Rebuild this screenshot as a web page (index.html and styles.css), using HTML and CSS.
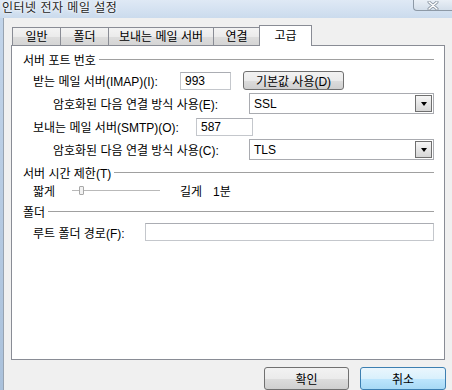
FILE: index.html
```html
<!DOCTYPE html>
<html lang="ko">
<head>
    <meta charset="UTF-8">
    <title>인터넷 전자 메일 설정</title>
    <link rel="stylesheet" href="styles.css">
</head>
<body>
    <div class="window">
        <div class="titlebar">
            <span class="title">인터넷 전자 메일 설정</span>
            <div class="close-btn">
                <svg width="14" height="9" viewBox="0 0 14 9">
                    <path d="M3 1 L11 8 M11 1 L3 8" stroke="#8a96a3" stroke-width="3" stroke-linecap="round"/>
                    <path d="M3 1 L11 8 M11 1 L3 8" stroke="#ffffff" stroke-width="1.4" stroke-linecap="round"/>
                </svg>
            </div>
        </div>

        <div class="client">
            <div class="tabs">
                <div class="tab tab-general">일반</div>
                <div class="tab tab-folder">폴더</div>
                <div class="tab tab-smtp">보내는 메일 서버</div>
                <div class="tab tab-conn">연결</div>
                <div class="tab tab-adv active">고급</div>
            </div>

            <div class="panel">
                <div class="group"><span>서버 포트 번호</span></div>

                <div class="row indent1">
                    <span class="label lbl-imap">받는 메일 서버(IMAP)(I):</span>
                    <div class="textbox port-imap">993</div>
                    <button class="push-btn" type="button">기본값 사용(D)</button>
                </div>
                <div class="row indent2">
                    <span class="label lbl-enc">암호화된 다음 연결 방식 사용(E):</span>
                    <div class="combo">
                        <span class="combo-text">SSL</span>
                        <span class="combo-arrow"></span>
                    </div>
                </div>
                <div class="row indent1">
                    <span class="label lbl-smtp">보내는 메일 서버(SMTP)(O):</span>
                    <div class="textbox port-smtp">587</div>
                </div>
                <div class="row indent2">
                    <span class="label lbl-enc">암호화된 다음 연결 방식 사용(C):</span>
                    <div class="combo">
                        <span class="combo-text">TLS</span>
                        <span class="combo-arrow"></span>
                    </div>
                </div>

                <div class="group group-timeout"><span>서버 시간 제한(T)</span></div>
                <div class="row slider-row indent1">
                    <span class="label lbl-short">짧게</span>
                    <div class="slider"><span class="thumb"></span></div>
                    <span class="lbl-long">길게</span>
                    <span class="lbl-value">1분</span>
                </div>

                <div class="group group-folder"><span>폴더</span></div>
                <div class="row root-row indent1">
                    <span class="label lbl-root">루트 폴더 경로(F):</span>
                    <div class="textbox root-path"></div>
                </div>
            </div>

            <div class="footer">
                <button class="dlg-btn" type="button">확인</button>
                <button class="dlg-btn default" type="button">취소</button>
            </div>
        </div>
    </div>
</body>
</html>
```

FILE: styles.css
```css
html, body {
    margin: 0;
    padding: 0;
    width: 452px;
    height: 390px;
    overflow: hidden;
}

body {
    font-family: "Liberation Sans", "Noto Sans CJK KR", sans-serif;
    font-size: 12px;
    color: #000;
    background: linear-gradient(to bottom, #c3d5ea, #aac1db);
}

.window {
    display: flex;
    flex-direction: column;
    height: 390px;
}

/* 타이틀바 */
.titlebar {
    display: flex;
    align-items: flex-start;
    height: 21px;
    background: linear-gradient(to bottom, #dfe9f5, #cbdbed);
}

.title {
    padding: 1px 0 0 2px;
    font-size: 12px;
    line-height: 15px;
    color: #1e1e1e;
    letter-spacing: 0.5px;
    text-shadow: 0 0 4px #fff, 0 0 2px #fff;
}

.close-btn {
    margin-left: auto;
    width: 38px;
    height: 10px;
    display: flex;
    align-items: center;
    justify-content: center;
    border: 1px solid #8d99a6;
    border-top: none;
    border-right: none;
    border-radius: 0 0 0 4px;
    background: linear-gradient(to bottom, #e9eff6, #d3deea);
}

/* 본문 */
.client {
    flex: 1;
    margin-left: 3px;
    border-left: 1px solid #97a3b1;
    background: #f0f0f0;
    padding: 0 7px;
}

.tabs {
    display: flex;
    align-items: flex-end;
    height: 20px;
    margin-top: 7px;
    padding-left: 1px;
}

.tab {
    height: 18px;
    line-height: 18px;
    text-align: center;
    box-sizing: border-box;
    border: 1px solid #898c95;
    border-bottom: none;
    margin-right: -1px;
    background: linear-gradient(to bottom, #f3f3f3 0%, #ebebeb 50%, #dddddd 51%, #d5d5d5 100%);
}

.tab-general { width: 49px; }
.tab-folder { width: 49px; }
.tab-smtp { width: 106px; }
.tab-conn { width: 47px; }

.tab.active {
    width: 53px;
    height: 21px;
    line-height: 20px;
    margin-bottom: -1px;
    background: #fff;
    position: relative;
    z-index: 1;
}

.panel {
    height: 315px;
    box-sizing: border-box;
    border: 1px solid #898c95;
    background: #fff;
    padding: 3px 10px 0 11px;
}

.group {
    display: flex;
    align-items: center;
    height: 20px;
    gap: 3px;
}

.group::after {
    content: "";
    flex: 1;
    border-top: 1px solid #a0a0a0;
}

.group-timeout { margin-top: 1px; }
.group-folder { margin-top: 3px; }

.row {
    display: flex;
    align-items: center;
    height: 23px;
}

.indent1 { padding-left: 10px; }
.indent2 { padding-left: 30px; }

.label {
    flex-shrink: 0;
    white-space: nowrap;
}

.lbl-imap { width: 147px; }
.lbl-smtp { width: 163px; }
.lbl-enc { width: 196px; }
.lbl-short { width: 39px; }
.lbl-root { width: 112px; }

.textbox {
    height: 18px;
    line-height: 16px;
    box-sizing: border-box;
    padding-left: 4px;
    border: 1px solid #c4c7cc;
    border-top-color: #abadb3;
    background: #fff;
}

.port-imap { width: 51px; }
.port-smtp { width: 57px; }
.root-path { width: 290px; }

.push-btn {
    margin-left: 12px;
    width: 101px;
    height: 19px;
    padding: 0;
    font: inherit;
    color: #000;
    border: 1px solid #707070;
    border-radius: 3px;
    background: linear-gradient(to bottom, #f2f2f2 0%, #ebebeb 50%, #dddddd 51%, #cfcfcf 100%);
}

.combo {
    width: 186px;
    height: 21px;
    box-sizing: border-box;
    border: 1px solid #a9abb0;
    padding: 1px;
    display: flex;
    align-items: center;
    background: #fff;
}

.combo-text {
    flex: 1;
    padding-left: 3px;
}

.combo-arrow {
    width: 17px;
    height: 17px;
    box-sizing: border-box;
    border: 1px solid #6f6f6f;
    background: linear-gradient(to bottom, #f6f6f6, #d6d6d6);
    display: flex;
    align-items: center;
    justify-content: center;
}

.combo-arrow::before {
    content: "";
    border-left: 3px solid transparent;
    border-right: 3px solid transparent;
    border-top: 4px solid #000;
    margin-top: 1px;
}

/* 슬라이더 */
.slider-row { height: 16px; }

.slider {
    width: 88px;
    height: 9px;
    box-sizing: border-box;
    padding-left: 7px;
    display: flex;
    align-items: center;
    background: linear-gradient(#b9b9b9, #b9b9b9) center / 100% 1px no-repeat;
}

.thumb {
    width: 3px;
    height: 7px;
    border: 1px solid #a8a8a8;
    border-radius: 1px;
    background: #f2f2f2;
}

.lbl-long { margin-left: 20px; }
.lbl-value { margin-left: 11px; }

.root-row { height: 22px; }

/* 하단 버튼 */
.footer {
    display: flex;
    justify-content: flex-end;
    gap: 11px;
    margin-top: 7px;
    margin-right: -1px;
}

.dlg-btn {
    width: 85px;
    height: 23px;
    padding: 0;
    font: inherit;
    color: #000;
    border: 1px solid #707070;
    border-radius: 3px;
    background: linear-gradient(to bottom, #f2f2f2 0%, #ebebeb 50%, #dddddd 51%, #cfcfcf 100%);
}

.dlg-btn.default {
    width: 86px;
    border-color: #3c7fb1;
    background: linear-gradient(to bottom, #eaf6fd 0%, #d9f0fc 50%, #bee6fd 51%, #a7d9f5 100%);
}
```
